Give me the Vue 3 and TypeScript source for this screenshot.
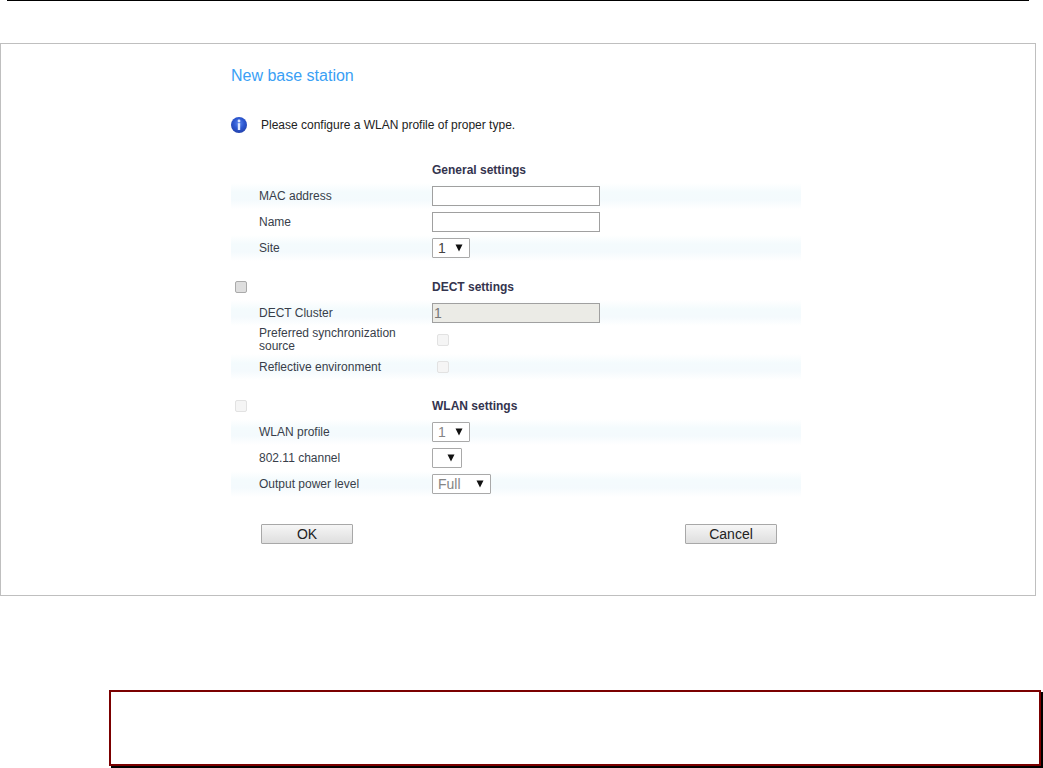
<script setup lang="ts">
import { reactive } from 'vue'

interface Field {
  id: string
  label: string
  kind: 'text' | 'select' | 'checkbox'
  value?: string
  size?: 'empty' | 'short' | 'long'
  disabled?: boolean
}

interface Section {
  id: string
  title: string
  toggle?: 'enabled' | 'disabled'
  fields: Field[]
}

const sections = reactive<Section[]>([
  {
    id: 'general',
    title: 'General settings',
    fields: [
      { id: 'mac', label: 'MAC address', kind: 'text', value: '' },
      { id: 'name', label: 'Name', kind: 'text', value: '' },
      { id: 'site', label: 'Site', kind: 'select', value: '1', size: 'short' },
    ],
  },
  {
    id: 'dect',
    title: 'DECT settings',
    toggle: 'enabled',
    fields: [
      { id: 'cluster', label: 'DECT Cluster', kind: 'text', value: '1', disabled: true },
      { id: 'sync', label: 'Preferred synchronization source', kind: 'checkbox', disabled: true },
      { id: 'reflective', label: 'Reflective environment', kind: 'checkbox', disabled: true },
    ],
  },
  {
    id: 'wlan',
    title: 'WLAN settings',
    toggle: 'disabled',
    fields: [
      { id: 'profile', label: 'WLAN profile', kind: 'select', value: '1', size: 'short', disabled: true },
      { id: 'channel', label: '802.11 channel', kind: 'select', value: '', size: 'empty', disabled: true },
      { id: 'power', label: 'Output power level', kind: 'select', value: 'Full', size: 'long', disabled: true },
    ],
  },
])
</script>

<template>
  <div class="page">
    <hr class="rule" />
    <main class="panel">
      <form class="form" @submit.prevent>
        <h1 class="title">New base station</h1>
        <p class="notice">
          <svg class="info" viewBox="0 0 16 16" aria-hidden="true">
            <defs>
              <radialGradient id="ball" cx="0.5" cy="0.4" r="0.6">
                <stop offset="0" stop-color="#5c86ee" />
                <stop offset="0.55" stop-color="#2c57d0" />
                <stop offset="1" stop-color="#2443ad" />
              </radialGradient>
            </defs>
            <circle cx="8" cy="8" r="8" fill="url(#ball)" />
            <circle cx="8" cy="4" r="1.4" fill="#dfe9ff" />
            <path d="M6.8 6.2h2.4v6.8H6.8z" fill="#dfe9ff" />
          </svg>
          <span>Please configure a WLAN profile of proper type.</span>
        </p>

        <section v-for="s in sections" :key="s.id" class="section">
          <div class="row heading">
            <input
              v-if="s.toggle"
              type="checkbox"
              class="check"
              :class="{ strong: s.toggle === 'enabled' }"
              :disabled="s.toggle === 'disabled'"
              :aria-label="s.title"
            />
            <h2 class="subtitle">{{ s.title }}</h2>
          </div>
          <div v-for="f in s.fields" :key="f.id" class="row field">
            <label class="label" :for="f.id">{{ f.label }}</label>
            <input
              v-if="f.kind === 'text'"
              :id="f.id"
              v-model="f.value"
              type="text"
              class="text control"
              :disabled="f.disabled"
            />
            <input
              v-else-if="f.kind === 'checkbox'"
              :id="f.id"
              type="checkbox"
              class="check inset control"
              :disabled="f.disabled"
            />
            <span v-else class="picker control" :class="f.size">
              <select :id="f.id" v-model="f.value" class="select" :disabled="f.disabled">
                <option :value="f.value">{{ f.value }}</option>
              </select>
              <svg class="arrow" viewBox="0 0 8 8" aria-hidden="true">
                <path d="M0.5 0.5h7L4 7.5z" fill="#111" />
              </svg>
            </span>
          </div>
        </section>

        <div class="actions">
          <button type="submit" class="button">OK</button>
          <button type="button" class="button">Cancel</button>
        </div>
      </form>
    </main>
    <aside class="callout"></aside>
  </div>
</template>

<style>
body {
  background: #fff;
}
</style>

<style scoped>
.page {
  padding-bottom: 2px;
  font-family: "Liberation Sans", Arial, sans-serif;
  font-size: 12px;
  line-height: 13px;
  color: #383e4a;
}
.rule {
  height: 1px;
  margin: 0 14px 42px 7px;
  border: 0;
  background: #000;
}
.panel {
  margin-right: 7px;
  padding: 22px 0 51px;
  border: 1px solid #bfbfbf;
}
.form {
  box-sizing: border-box;
  max-width: 574px;
  margin: 0 auto;
}
.title {
  margin: 0;
  font-size: 16px;
  line-height: 20px;
  font-weight: 400;
  color: #3a9ff5;
}
.notice {
  display: flex;
  align-items: center;
  gap: 14px;
  height: 20px;
  margin: 29px 0 22px;
  color: #222;
}
.info {
  width: 16px;
  height: 16px;
}
.section {
  margin: 0 4px 13px 0;
}
.row {
  display: grid;
  grid-template-columns: 28px 173px 1fr;
  align-items: center;
  min-height: 26px;
}
.field:nth-child(even) {
  background: linear-gradient(#fff, #f4fbfd 35%, #f4fafd 65%, #fff);
}
.subtitle {
  grid-column: 3;
  margin: 0;
  font-size: 12px;
  font-weight: 700;
  color: #34344e;
}
.label {
  grid-column: 2;
  padding: 1px 8px 1px 0;
}
.control {
  grid-column: 3;
}
.text {
  box-sizing: border-box;
  width: 168px;
  height: 20px;
  margin: 0;
  padding: 0 1px;
  border: 1px solid #a0a0a0;
  background: #fff;
  font: 14px "Liberation Sans", Arial, sans-serif;
  color: #333;
}
.text:disabled {
  background: #ebebe6;
  color: #777;
}
.check {
  appearance: none;
  box-sizing: border-box;
  width: 12px;
  height: 12px;
  margin: 0 0 0 4px;
  border: 1px solid #e2e2e2;
  border-radius: 2px;
  background: #f5f5f5;
}
.check.strong {
  border-color: #aaa;
  background: #dedede;
}
.check.inset {
  margin-left: 5px;
}
.picker {
  position: relative;
  display: block;
  height: 20px;
}
.picker.empty {
  width: 30px;
}
.picker.short {
  width: 38px;
}
.picker.long {
  width: 59px;
}
.select {
  appearance: none;
  display: block;
  box-sizing: border-box;
  width: 100%;
  height: 20px;
  margin: 0;
  padding: 0 0 0 5px;
  border: 1px solid #a9a9a9;
  border-radius: 1px;
  background: #fff;
  font: 14px "Liberation Sans", Arial, sans-serif;
  color: #444;
}
.select:disabled {
  color: #858585;
  opacity: 1;
}
.arrow {
  position: absolute;
  top: 6px;
  right: 7px;
  width: 8px;
  height: 8px;
  pointer-events: none;
}
.actions {
  display: flex;
  justify-content: space-between;
  padding: 14px 28px 0 30px;
}
.button {
  box-sizing: border-box;
  width: 92px;
  height: 20px;
  padding: 0;
  border: 1px solid #a8a8a8;
  border-radius: 1px;
  background: linear-gradient(#f6f6f6, #dedede);
  font: 14px "Liberation Sans", Arial, sans-serif;
  color: #222;
}
.callout {
  box-sizing: border-box;
  min-height: 76px;
  margin: 94px 2px 0 109px;
  border: 2px solid #7b0000;
  box-shadow: 2px 2px 0 #000;
}
</style>
